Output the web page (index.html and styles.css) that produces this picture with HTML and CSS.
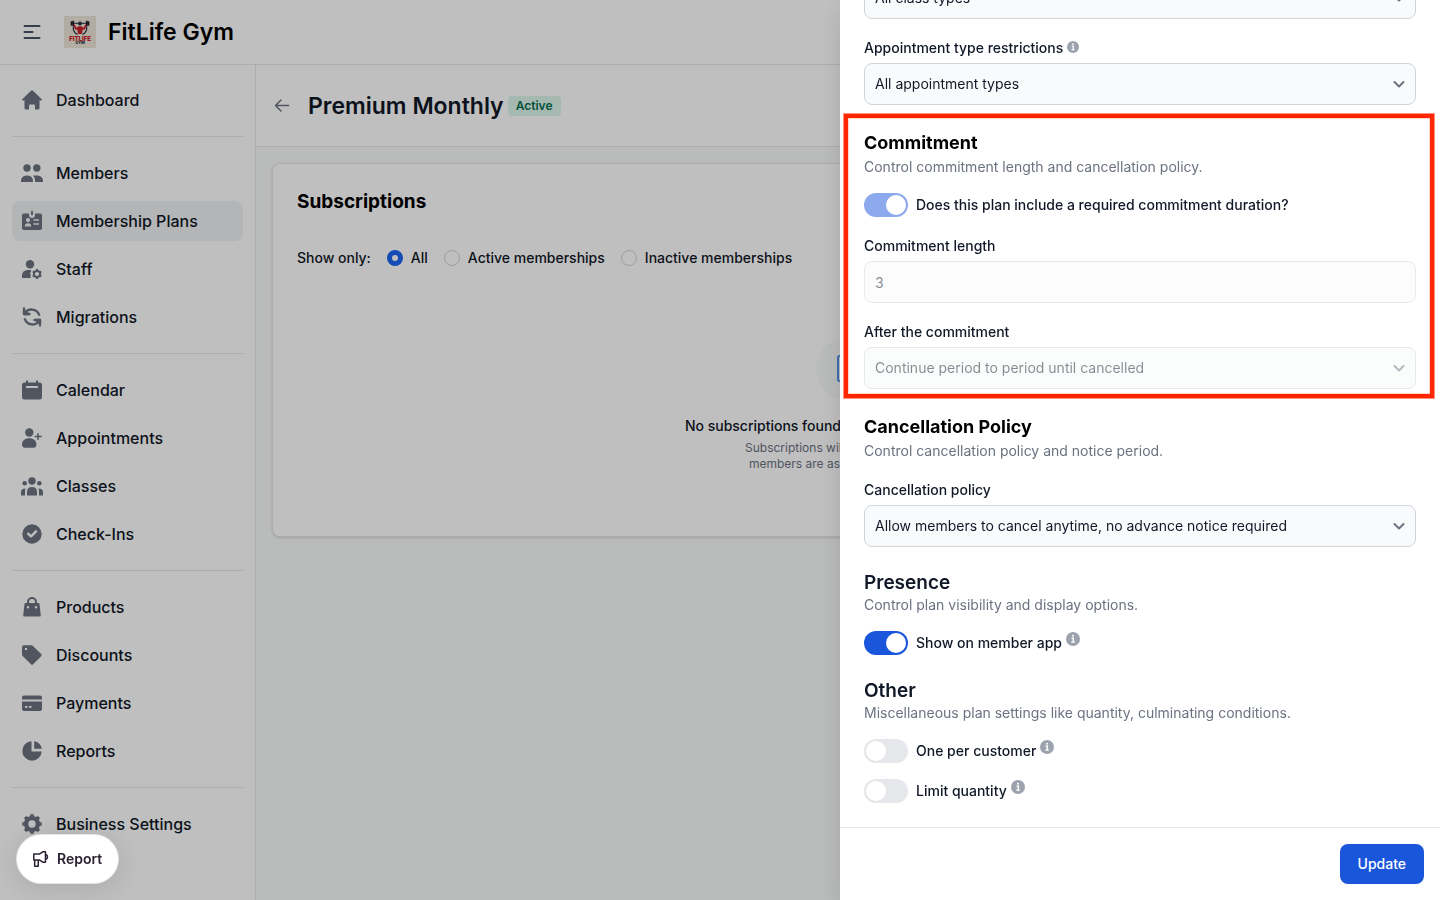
FILE: index.html
```html
<!DOCTYPE html>
<html lang="en">

<head>
    <meta charset="UTF-8">
    <meta name="viewport" content="width=device-width, initial-scale=1.0">
    <title>Premium Monthly - FitLife Gym</title>
    <link rel="stylesheet" href="styles.css">
</head>

<body>

    <header class="topbar">
        <button class="icon-btn" aria-label="Toggle menu">
            <svg class="icon" viewBox="0 0 24 24" fill="none" stroke="currentColor" stroke-width="2" stroke-linecap="round">
                <path d="M4.500 6h15M4.500 12h8M4.500 18h15" />
            </svg>
        </button>
        <svg class="logo" viewBox="0 0 32 32" role="img" aria-label="FitLife Gym logo">
            <rect width="32" height="32" fill="#efe6da" />
            <path d="M9.5 10.5a6.8 6.8 0 0 0 4 8M22.5 10.5a6.8 6.8 0 0 1-4 8" fill="none" stroke="#23303a" stroke-width="1.2" />
            <path d="M7 7.3h18" stroke="#23303a" stroke-width="1" />
            <path d="M7.5 5.3v4.500M9.300 4.800v5.500M24.500 5.300v4.500M22.700 4.800v5.500" stroke="#1b2730" stroke-width="1.700" />
            <circle cx="16" cy="7.5" r="1.9" fill="#23303a" />
            <path d="M10.3 8l2.3 3.7 1.900-1.500h3l1.900 1.500L21.700 8l1 .8-1.800 4.600-2.200.4-.7 4.200h-4l-.7-4.200-2.200-.4-1.800-4.600z" fill="#c9232b" />
            <text x="16" y="24.5" text-anchor="middle" class="logo-name">FITLIFE</text>
            <text x="16" y="28" text-anchor="middle" class="logo-sub">GYM</text>
        </svg>
        <span class="brand">FitLife Gym</span>
    </header>

    <div class="layout">
        <nav class="sidebar">
            <div class="nav-group">
                <a class="nav-item" href="#">
                    <svg class="icon" viewBox="0 0 24 24" fill="currentColor">
                        <path d="M11.3 2.6a1 1 0 0 1 1.4 0l8.800 8.400a.9.9 0 0 1-.6 1.600H19.500V20a1.500 1.500 0 0 1-1.500 1.500h-2.500A.5.5 0 0 1 15 21v-3.500a1 1 0 0 0-1-1h-4a1 1 0 0 0-1 1V21a.5.5 0 0 1-.5.5H6A1.500 1.500 0 0 1 4.500 20v-7.400H3.100a.9.9 0 0 1-.6-1.600z" />
                    </svg>
                    Dashboard
                </a>
            </div>
            <div class="nav-group">
                <a class="nav-item" href="#">
                    <svg class="icon" viewBox="0 0 24 24" fill="currentColor">
                        <circle cx="7" cy="7" r="3.7" />
                        <circle cx="16.8" cy="7" r="3.7" />
                        <path d="M1 21v-1.3a5.2 5.2 0 0 1 5.2-5.2h1.6a5.2 5.2 0 0 1 5.2 5.2V21zM13.500 14.500h4.300a5.200 5.200 0 0 1 5.200 5.200V21h-8v-1.800a6.500 6.500 0 0 0-1.900-4.500z" />
                    </svg>
                    Members
                </a>
                <a class="nav-item active" href="#">
                    <svg class="icon" viewBox="0 0 24 24" fill="currentColor">
                        <path fill-rule="evenodd" d="M4 4.500h5V6a3 3 0 0 0 6 0V4.500h5a2 2 0 0 1 2 2V19a2 2 0 0 1-2 2H4a2 2 0 0 1-2-2V6.500a2 2 0 0 1 2-2zM8 9a2 2 0 1 0 0 4.200A2 2 0 0 0 8 9zM4.800 17.500h6.400c0-2-1-3.200-3.200-3.200s-3.200 1.200-3.200 3.200zM13.500 10.200v1.600H19v-1.600zM13.500 14.200v1.600H19v-1.600z" />
                        <path d="M12 2.800v2.400" stroke="currentColor" stroke-width="2" stroke-linecap="round" />
                    </svg>
                    Membership Plans
                </a>
                <a class="nav-item" href="#">
                    <svg class="icon" viewBox="0 0 24 24" fill="currentColor">
                        <circle cx="10" cy="7.2" r="4.2" />
                        <path d="M2 21v-2.500A5.500 5.500 0 0 1 7.500 13h3.300l.4 1.500-1.200 1.800.9 1.700-.6 1.500.7 1.500z" />
                        <circle cx="17" cy="17" r="3.1" fill="none" stroke="currentColor" stroke-width="2" />
                        <path d="M17 12v1.500M17 20.500V22M12.700 14.500l1.300.8M20 18.700l1.300.8M12.700 19.500l1.300-.8M20 15.300l1.300-.8" stroke="currentColor" stroke-width="2" />
                    </svg>
                    Staff
                </a>
                <a class="nav-item" href="#">
                    <svg class="icon" viewBox="0 0 24 24" fill="none" stroke="currentColor" stroke-width="2.300" stroke-linecap="round" stroke-linejoin="round">
                        <path d="M4 3.500V9h5.500M4.500 8.500A8.200 8.200 0 0 1 19.200 9.800M20 20.500V15h-5.500M19.500 15.500A8.200 8.200 0 0 1 4.800 14.200" />
                        <path d="M4 6v3h4zM20 18v-3h-4z" fill="currentColor" />
                    </svg>
                    Migrations
                </a>
            </div>
            <div class="nav-group">
                <a class="nav-item" href="#">
                    <svg class="icon" viewBox="0 0 24 24" fill="currentColor">
                        <path fill-rule="evenodd" d="M6 3.300a1 1 0 0 1 2 0v1.200h8V3.300a1 1 0 0 1 2 0v1.200h1.500A2.500 2.500 0 0 1 22 7v12a2.500 2.500 0 0 1-2.500 2.500h-15A2.500 2.500 0 0 1 2 19V7a2.500 2.500 0 0 1 2.500-2.500H6zM6.800 8a1 1 0 0 0 0 2h10.400a1 1 0 0 0 0-2z" />
                    </svg>
                    Calendar
                </a>
                <a class="nav-item" href="#">
                    <svg class="icon" viewBox="0 0 24 24" fill="currentColor">
                        <circle cx="9.300" cy="6.500" r="4.200" />
                        <path d="M2 18.500C2 14.800 4.800 12.300 9.200 12.300s7.200 2.500 7.200 6.200c0 2-1.100 3.300-3 3.300H5c-1.900 0-3-1.300-3-3.300z" />
                        <path d="M18 7.700v5.600M15.200 10.500h6" stroke="currentColor" stroke-width="1.600" stroke-linecap="round" />
                    </svg>
                    Appointments
                </a>
                <a class="nav-item" href="#">
                    <svg class="icon" viewBox="0 0 24 24" fill="currentColor">
                        <circle cx="12" cy="7" r="3.7" />
                        <circle cx="4.7" cy="9.3" r="2.3" />
                        <circle cx="19.3" cy="9.3" r="2.3" />
                        <path d="M7 21.500V18c0-3 1.800-4.900 5-4.900s5 1.900 5 4.900v3.500zM5.500 14.600a7 7 0 0 0-.5 2.900v4H1V18c0-2.100 1.600-3.500 4.500-3.400zM18.500 14.600a7 7 0 0 1 .5 2.900v4h4V18c0-2.100-1.600-3.500-4.500-3.400z" />
                    </svg>
                    Classes
                </a>
                <a class="nav-item" href="#">
                    <svg class="icon" viewBox="0 0 24 24" fill="currentColor">
                        <path fill-rule="evenodd" d="M12 2.300a9.700 9.700 0 1 0 0 19.400 9.700 9.700 0 0 0 0-19.400zm4.900 7.900a1.200 1.200 0 0 0-1.700-1.700L11 12.700l-2-1.900a1.200 1.200 0 0 0-1.700 1.700l2.800 2.700a1.200 1.200 0 0 0 1.700 0z" />
                    </svg>
                    Check-Ins
                </a>
            </div>
            <div class="nav-group">
                <a class="nav-item" href="#">
                    <svg class="icon" viewBox="0 0 24 24" fill="currentColor">
                        <path fill-rule="evenodd" d="M7 8V7a5 5 0 0 1 10 0v1h1.500a1 1 0 0 1 1 .9l1.300 11.500a1 1 0 0 1-1 1.100H4.200a1 1 0 0 1-1-1.100L4.500 8.900a1 1 0 0 1 1-.9zm2 0h6V7a3 3 0 0 0-6 0zm-1 3a1.200 1.200 0 1 0 0 2.400A1.200 1.200 0 0 0 8 11zm8 0a1.200 1.200 0 1 0 0 2.400 1.200 1.200 0 0 0 0-2.400z" />
                    </svg>
                    Products
                </a>
                <a class="nav-item" href="#">
                    <svg class="icon" viewBox="0 0 24 24" fill="currentColor">
                        <path fill-rule="evenodd" d="M4 2.300h7.500a2 2 0 0 1 1.400.6l8.300 8.200a1.500 1.500 0 0 1 0 2.100l-8.100 8.100a1.500 1.500 0 0 1-2.100 0L2.600 13A2 2 0 0 1 2 11.600V4.300a2 2 0 0 1 2-2zm2 2.400a1.200 1.200 0 1 0 0 2.400 1.200 1.200 0 0 0 0-2.400z" />
                    </svg>
                    Discounts
                </a>
                <a class="nav-item" href="#">
                    <svg class="icon" viewBox="0 0 24 24" fill="currentColor">
                        <path fill-rule="evenodd" d="M4 4.500h16a2 2 0 0 1 2 2V8.500H2v-2a2 2 0 0 1 2-2zM2 10.500h20V18a2 2 0 0 1-2 2H4a2 2 0 0 1-2-2zm3 4.500v1.700h2.500V15zm4 0v1.700h2.500V15z" />
                    </svg>
                    Payments
                </a>
                <a class="nav-item" href="#">
                    <svg class="icon" viewBox="0 0 24 24" fill="currentColor">
                        <path d="M11.500 2.300v10.200h10.200A9.700 9.700 0 1 1 11.500 2.300z" />
                        <path d="M14.200 2.300a8.500 8.500 0 0 1 7.600 7.500h-7.600z" />
                    </svg>
                    Reports
                </a>
            </div>
            <div class="nav-group">
                <a class="nav-item" href="#">
                    <svg class="icon" viewBox="0 0 24 24" fill="none" stroke="currentColor">
                        <circle cx="12" cy="12" r="5.900" stroke-width="4.400" />
                        <path d="M12 2.300V6M12 18v3.700M2.300 12H6M18 12h3.700M5.100 5.100l2.700 2.700M16.200 16.200l2.700 2.700M5.100 18.900l2.700-2.700M16.200 7.800l2.700-2.700" stroke-width="3.600" />
                    </svg>
                    Business Settings
                </a>
            </div>
        </nav>

        <main class="main">
            <div class="page-head">
                <button class="back-btn" aria-label="Back">
                    <svg class="arrow" viewBox="0 0 16 16" fill="none" stroke="currentColor" stroke-width="1.500" stroke-linecap="round" stroke-linejoin="round">
                        <path d="M14.500 7.500h-13M7 2L1.500 7.500 7 13" />
                    </svg>
                </button>
                <h1>Premium Monthly</h1>
                <span class="badge">Active</span>
            </div>

            <section class="card">
                <h2>Subscriptions</h2>
                <div class="filters">
                    <span>Show only:</span>
                    <label><input type="radio" name="filter" checked> All</label>
                    <label><input type="radio" name="filter"> Active memberships</label>
                    <label><input type="radio" name="filter"> Inactive memberships</label>
                </div>
                <div class="empty">
                    <div class="empty-icon">
                        <svg viewBox="0 0 28 28" fill="none" stroke="currentColor" stroke-width="2" stroke-linejoin="round">
                            <rect x="4" y="1" width="20" height="25" rx="1.500" />
                            <path d="M9 8h10M9 13h10M9 18h6" />
                        </svg>
                    </div>
                    <p class="empty-title">No subscriptions found for this membership plan</p>
                    <p class="empty-text">Subscriptions will appear here when<br>members are assigned to this plan.</p>
                </div>
            </section>
        </main>
    </div>

    <div class="overlay"></div>

    <aside class="drawer">
        <form class="drawer-body">
            <div class="field">
                <label for="class-types">Class type restrictions</label>
                <select id="class-types">
                    <option>All class types</option>
                </select>
            </div>
            <div class="field">
                <label for="appointment-types">Appointment type restrictions
                    <svg class="info" viewBox="0 0 20 20"><circle cx="10" cy="10" r="10" /><path d="M8 9h2.500v5M7.500 14.500h5" /><circle class="dot" cx="10" cy="5.300" r="1.500" /></svg>
                </label>
                <select id="appointment-types">
                    <option>All appointment types</option>
                </select>
            </div>

            <section class="section highlight">
                <h3>Commitment</h3>
                <p>Control commitment length and cancellation policy.</p>
                <label class="switch">
                    <input type="checkbox" checked disabled>
                    <span>Does this plan include a required commitment duration?</span>
                </label>
                <div class="field">
                    <label for="length">Commitment length</label>
                    <input id="length" type="text" value="3" disabled>
                </div>
                <div class="field">
                    <label for="after">After the commitment</label>
                    <select id="after" disabled>
                        <option>Continue period to period until cancelled</option>
                    </select>
                </div>
            </section>

            <section class="section">
                <h3>Cancellation Policy</h3>
                <p>Control cancellation policy and notice period.</p>
                <div class="field">
                    <label for="policy">Cancellation policy</label>
                    <select id="policy">
                        <option>Allow members to cancel anytime, no advance notice required</option>
                    </select>
                </div>
            </section>

            <section class="section">
                <h3 class="large">Presence</h3>
                <p>Control plan visibility and display options.</p>
                <label class="switch">
                    <input type="checkbox" checked>
                    <span>Show on member app</span>
                    <svg class="info" viewBox="0 0 20 20"><circle cx="10" cy="10" r="10" /><path d="M8 9h2.500v5M7.500 14.500h5" /><circle class="dot" cx="10" cy="5.300" r="1.500" /></svg>
                </label>
            </section>

            <section class="section">
                <h3 class="large">Other</h3>
                <p>Miscellaneous plan settings like quantity, culminating conditions.</p>
                <label class="switch">
                    <input type="checkbox">
                    <span>One per customer</span>
                    <svg class="info" viewBox="0 0 20 20"><circle cx="10" cy="10" r="10" /><path d="M8 9h2.500v5M7.500 14.500h5" /><circle class="dot" cx="10" cy="5.300" r="1.500" /></svg>
                </label>
                <label class="switch">
                    <input type="checkbox">
                    <span>Limit quantity</span>
                    <svg class="info" viewBox="0 0 20 20"><circle cx="10" cy="10" r="10" /><path d="M8 9h2.500v5M7.500 14.500h5" /><circle class="dot" cx="10" cy="5.300" r="1.500" /></svg>
                </label>
            </section>
        </form>
        <footer class="drawer-foot">
            <button class="btn">Update</button>
        </footer>
    </aside>

    <button class="report-btn">
        <svg viewBox="0 0 20 20" fill="none" stroke="currentColor" stroke-width="1.900" stroke-linejoin="round">
            <path d="M1 3.700h7.400L12.300 1h3.300v13h-3.300l-3.900-2.700H1zM2.100 11.300V19h4.500v-7.700M15.600 4.200a3.400 3.400 0 0 1 0 6.600" />
        </svg>
        Report
    </button>

</body>

</html>
```

FILE: styles.css
```css
*,
*::before,
*::after {
    box-sizing: border-box;
}

body {
    margin: 0;
    height: 100vh;
    display: flex;
    flex-direction: column;
    overflow: hidden;
    font-family: Inter, "Liberation Sans", sans-serif;
    font-size: 14px;
    line-height: 20px;
    color: #111827;
    background-color: white;
}

h1,
h2,
h3,
p {
    margin: 0;
}

button,
input,
select {
    font: inherit;
    color: inherit;
}

.icon {
    width: 24px;
    height: 24px;
    flex-shrink: 0;
}

/* top bar */
.topbar {
    display: flex;
    align-items: center;
    height: 65px;
    padding: 0 20px;
    border-bottom: 1px solid #e5e7eb;
    flex-shrink: 0;
}

.icon-btn,
.back-btn {
    display: flex;
    padding: 0;
    border: none;
    background: none;
    color: #4b5563;
}

.logo {
    width: 32px;
    height: 32px;
    margin: 0 12px 0 20px;
}

.logo-name {
    font-size: 6px;
    font-weight: 900;
    fill: #c9232b;
}

.logo-sub {
    font-size: 4px;
    font-weight: 800;
    fill: #23303a;
}

.brand {
    font-size: 23px;
    font-weight: 600;
    line-height: 32px;
    color: black;
}

/* sidebar */
.layout {
    display: flex;
    flex: 1;
    min-height: 0;
}

.sidebar {
    width: 256px;
    flex-shrink: 0;
    padding: 15px 12px;
    border-right: 1px solid #e5e7eb;
}

.nav-group {
    display: flex;
    flex-direction: column;
    gap: 8px;
}

.nav-group + .nav-group {
    margin-top: 16px;
    padding-top: 16px;
    border-top: 1px solid #e5e7eb;
}

.nav-item {
    display: flex;
    align-items: center;
    gap: 12px;
    height: 40px;
    padding: 0 8px;
    border-radius: 8px;
    font-size: 16px;
    font-weight: 500;
    color: #111827;
    text-decoration: none;
}

.nav-item.active {
    background-color: #f0f2f4;
}

.nav-item .icon {
    color: #6b7280;
}

/* main */
.main {
    flex: 1;
    min-width: 0;
    background-color: #f9fafa;
}

.page-head {
    display: flex;
    align-items: center;
    height: 82px;
    padding: 0 18px;
    border-bottom: 1px solid #e5e7eb;
    background-color: white;
}

.page-head h1 {
    margin: 0 4px 0 18px;
    font-size: 23px;
    font-weight: 600;
    line-height: 32px;
}

.back-btn {
    color: #6b7280;
}

.arrow {
    width: 16px;
    height: 16px;
}

.badge {
    padding: 2px 8px;
    border-radius: 4px;
    background-color: #def7ec;
    color: #046c4e;
    font-size: 12px;
    font-weight: 600;
    line-height: 16px;
}

.card {
    margin: 16px;
    padding: 24px;
    border: 1px solid #e5e7eb;
    border-radius: 8px;
    background-color: white;
    box-shadow: 0 1px 3px rgba(0, 0, 0, 0.15);
}

.card h2 {
    font-size: 19px;
    font-weight: 700;
    line-height: 28px;
    color: black;
}

.filters {
    display: flex;
    gap: 16px;
    margin-top: 32px;
    font-weight: 500;
}

.filters label {
    display: flex;
    align-items: center;
    gap: 8px;
}

.filters input {
    appearance: none;
    width: 16px;
    height: 16px;
    margin: 0;
    border: 1px solid #d1d5db;
    border-radius: 50%;
    background-color: white;
}

.filters input:checked {
    border: 5px solid #1c64f2;
}

.empty {
    display: flex;
    flex-direction: column;
    align-items: center;
    padding: 69px 0 40px;
    text-align: center;
}

.empty-icon {
    display: flex;
    align-items: center;
    justify-content: center;
    width: 64px;
    height: 64px;
    border-radius: 50%;
    background-color: #f9fafa;
    color: #5593f0;
}

.empty-icon svg {
    width: 28px;
    height: 28px;
}

.empty-title {
    margin-top: 15px;
    font-weight: 500;
}

.empty-text {
    margin-top: 4px;
    font-size: 12px;
    line-height: 16px;
    color: #6b7280;
}

/* drawer */
.overlay {
    position: fixed;
    inset: 0;
    background-color: rgba(0, 0, 0, 0.25);
}

.drawer {
    position: fixed;
    top: 0;
    right: 0;
    bottom: 0;
    display: flex;
    flex-direction: column;
    width: 600px;
    max-width: 100%;
    background-color: white;
    box-shadow: 0 8px 24px rgba(0, 0, 0, 0.12);
}

/* scrolled to the end of the form */
.drawer-body {
    display: flex;
    flex: 1;
    flex-direction: column;
    justify-content: flex-end;
    min-height: 0;
    padding: 24px;
    overflow: hidden;
}

.drawer-foot {
    display: flex;
    justify-content: flex-end;
    padding: 16px;
    border-top: 1px solid #e5e7eb;
    background-color: white;
}

.btn {
    height: 40px;
    padding: 0 18px;
    border: none;
    border-radius: 8px;
    background-color: #1a56db;
    color: white;
    font-weight: 500;
}

.section {
    position: relative;
    margin-top: 24px;
}

.section h3 {
    font-size: 18px;
    font-weight: 700;
    line-height: 28px;
    color: black;
}

.section h3.large {
    font-size: 19px;
    font-weight: 600;
    line-height: 24px;
    color: #111827;
}

.section p {
    color: #6b7280;
}

.highlight::after {
    content: "";
    position: absolute;
    inset: -15px -18px -9px -20px;
    border: 4px solid #ff2600;
    box-shadow: 0 0 0 1px rgba(255, 38, 0, 0.5), inset 0 0 0 1px rgba(255, 38, 0, 0.2);
    pointer-events: none;
}

.field {
    margin-top: 22px;
}

.field label {
    display: flex;
    gap: 4px;
    margin-bottom: 8px;
    font-weight: 500;
    line-height: 14px;
}

.field input,
.field select {
    display: block;
    width: 100%;
    height: 42px;
    padding: 0 10px;
    border: 1px solid #d1d5db;
    border-radius: 8px;
    background-color: #f9fafb;
    opacity: 1;
}

.field select {
    appearance: none;
    background-image: url("data:image/svg+xml,%3Csvg xmlns='http://www.w3.org/2000/svg' viewBox='0 0 12 12' fill='none' stroke='%236b7280' stroke-width='2' stroke-linecap='round' stroke-linejoin='round'%3E%3Cpath d='M1.500 4L6 8.500 10.500 4'/%3E%3C/svg%3E");
    background-repeat: no-repeat;
    background-position: right 10px center;
    background-size: 12px 12px;
}

.field input:disabled,
.field select:disabled {
    background-color: #f9fafb;
    opacity: 0.5;
}

.switch {
    display: flex;
    align-items: center;
    gap: 8px;
    margin-top: 16px;
    font-weight: 500;
}

.switch input {
    appearance: none;
    width: 44px;
    height: 24px;
    margin: 0;
    padding: 2px;
    border-radius: 12px;
    background-color: #e5e7eb;
}

.switch input::before {
    content: "";
    display: block;
    width: 20px;
    height: 20px;
    border-radius: 50%;
    background-color: white;
}

.switch input:checked {
    background-color: #1a56db;
}

.switch input:checked::before {
    margin-left: 20px;
}

.switch input:disabled {
    opacity: 0.5;
}

.info {
    width: 12px;
    height: 12px;
    fill: #9ca3af;
}

.info path {
    fill: none;
    stroke: white;
    stroke-width: 2;
}

.info .dot {
    fill: white;
}

.switch .info {
    align-self: flex-start;
    width: 14px;
    height: 14px;
    margin: 1px 0 0 -4px;
}

/* feedback widget */
.report-btn {
    position: fixed;
    left: 16px;
    bottom: 16px;
    display: flex;
    align-items: center;
    gap: 8px;
    height: 50px;
    padding: 0 16px;
    border: 1px solid #e5e2e8;
    border-radius: 25px;
    background-color: white;
    box-shadow: 0 4px 24px rgba(43, 34, 51, 0.12);
    color: #2b2233;
    font-weight: 600;
}

.report-btn svg {
    width: 16px;
    height: 16px;
}
```
